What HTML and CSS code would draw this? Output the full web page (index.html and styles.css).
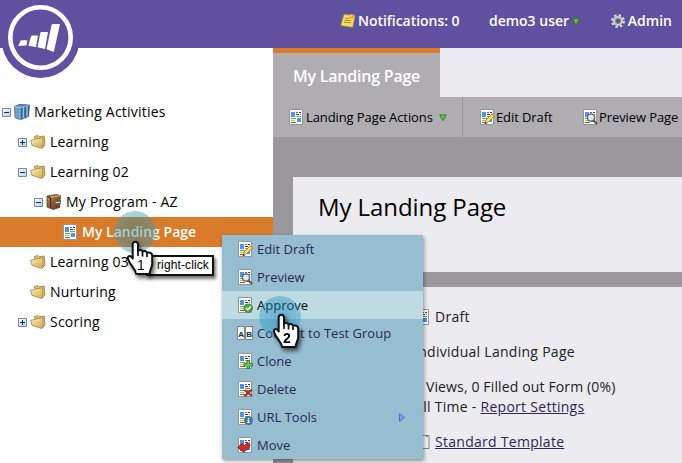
FILE: index.html
```html
<!DOCTYPE html>
<html lang="en">
<head>
<meta charset="utf-8">
<title>My Landing Page</title>
<link rel="stylesheet" href="styles.css">
</head>
<body>
<svg class="defs" width="0" height="0" aria-hidden="true">
  <defs>
    <linearGradient id="gold" x1="0" y1="0" x2="1" y2="1"><stop offset="0" stop-color="#fff3bd"/><stop offset="1" stop-color="#cda74b"/></linearGradient>
    <linearGradient id="blue" x1="0" y1="0" x2="1" y2="0"><stop offset="0" stop-color="#7fadd2"/><stop offset="1" stop-color="#2b5f91"/></linearGradient>
    <linearGradient id="boxfill" x1="0" y1="0" x2="1" y2="1"><stop offset="0" stop-color="#fff"/><stop offset="1" stop-color="#bccbe2"/></linearGradient>
    <linearGradient id="leather" x1="0" y1="0" x2="1" y2="1"><stop offset="0" stop-color="#b98c61"/><stop offset="1" stop-color="#593016"/></linearGradient>
    <symbol id="page" viewBox="0 0 16 16">
      <path d="M1.500.5h13v15h-13z" fill="#fff" stroke="#8c979f"/>
      <path d="M3 3h4v5H3zM9 9h4v4H9z" fill="#5094e0"/>
      <path d="M8 3.500h2M12 5.500h1" stroke="#d33a35"/><path d="M11 3.500h2M8 5.500h3" stroke="#343e4c"/>
      <path d="M8 7.500h5M3 9.500h5" stroke="#65ae40"/><path d="M3 11.500h4" stroke="#ddb52c"/><path d="M3 13.500h5" stroke="#b84636"/>
    </symbol>
    <symbol id="edit" viewBox="0 0 16 16"><use href="#page" width="16" height="16"/><path d="M6 15l1-4 6-6 2.500 2-6 6z" fill="#ffe25b" stroke="#8b6e24" stroke-width=".8"/><path d="M6 15l.5-2 1.300 1.300z" fill="#222"/><path d="M13 5l2.500 2 .5-1.500-1.500-1.400z" fill="#d98e73"/></symbol>
    <symbol id="preview" viewBox="0 0 16 16"><use href="#page" width="16" height="16"/><circle cx="9" cy="8.500" r="3.600" fill="#dcecf8" fill-opacity=".9" stroke="#59616b" stroke-width="1.300"/><path d="M11.500 11.500l3.600 3.600" stroke="#70462f" stroke-width="2"/></symbol>
    <symbol id="approve" viewBox="0 0 16 16"><use href="#page" width="16" height="16"/><circle cx="11.200" cy="11.200" r="4.300" fill="#4da641" stroke="#327c2c" stroke-width=".7"/><path d="M9 11.100l1.700 1.700 3-3.300" fill="none" stroke="#fff" stroke-width="1.500"/></symbol>
    <symbol id="clone" viewBox="0 0 16 16"><use href="#page" width="16" height="16"/><path d="M10 7.500h2.500v3h3V13h-3v2.500H10V13H7v-2.500h3z" fill="#75cc57" stroke="#238332" stroke-width=".9"/></symbol>
    <symbol id="delete" viewBox="0 0 16 16"><use href="#page" width="16" height="16"/><path d="M7.500 9l7.500 6M15 8.500l-7.500 7" stroke="#bd2b26" stroke-width="2.200"/></symbol>
    <symbol id="url" viewBox="0 0 16 16"><use href="#page" width="16" height="16"/><circle cx="11.500" cy="11.500" r="4" fill="#487eaf" stroke="#31577d" stroke-width=".7"/><path d="M11.500 8.800v1.200M10.500 11h1v2.500m-1.200 0H13" stroke="#fff" fill="none" stroke-width="1.200"/></symbol>
    <symbol id="move" viewBox="0 0 16 16"><use href="#page" width="16" height="16"/><path d="M.5 10.500L5.500 6l.8 2.300C8.500 8.500 9.500 7 10 5.500l3 1.500c-.3 4-2 6.500-5.500 6.500l-.3 2z" fill="#c72f31" stroke="#841e29" stroke-width=".8"/></symbol>
    <symbol id="ab" viewBox="0 0 16 16"><path d="M.5 1.500h7v13h-7zM8.500 1.500h7v13h-7z" fill="#f5f7f8" stroke="#78868e"/><path d="M13 1.500h3" stroke="#d84d39"/><text x="1.200" y="11.500" class="letter">A</text><text x="9.200" y="11.500" class="letter">B</text></symbol>
    <symbol id="template" viewBox="0 0 16 16"><path d="M.5 1.500h14.500v13H.5z" fill="#f1f5f5" stroke="#78868e"/><path d="M12 2.500h2" stroke="#d84d39"/></symbol>
    <symbol id="folder" viewBox="0 0 16 16"><path d="M4.500 4V2.500L8 1.500l1.200 1.300 5-.8.800 9-2.500 2.500z" fill="#e1c273" stroke="#957c42" stroke-width=".8"/><path d="M.6 6.200l4.200-.7L6 4.800l6.800-1 .2 10-2 .5-9-3z" fill="url(#gold)" stroke="#a18442" stroke-width=".8"/></symbol>
    <symbol id="books" viewBox="0 0 16 16"><path d="M.5 2.500L5 .5l10.500.5-1 11.500-8 3.200L1 13.500z" fill="url(#blue)" stroke="#365f85" stroke-width=".8"/><path d="M1 2.700l4.700 1L15 1.300M6 4v11.500" fill="none" stroke="#b9d5ea" stroke-width=".8"/><path d="M9.800 3v11M13 2.300v10.500" stroke="#c6dff0"/><path d="M7.300 4v11M10.800 3v10.500" stroke="#244f77" stroke-width=".8"/></symbol>
    <symbol id="program" viewBox="0 0 16 16"><path d="M1 2l9-1.500 4.500 1-.8 12-6.500 2L1 13z" fill="url(#leather)" stroke="#684222" stroke-width=".8"/><path d="M1.500 2.500l3 1.200.3 11" fill="none" stroke="#41220f" stroke-width="1"/><path d="M4.500 3.200l9.500-1.600" stroke="#d7b48b"/><path d="M9 7.800l5.500-.9v2.200l-5.500.9z" fill="#efd7ae" stroke="#432713" stroke-width=".6"/></symbol>
    <symbol id="minus" viewBox="0 0 9 9"><path d="M.5.5h8v8h-8z" fill="url(#boxfill)" stroke="#7189ad"/><path d="M2 4.500h5" stroke="#182b4c"/></symbol>
    <symbol id="plus" viewBox="0 0 9 9"><use href="#minus" width="9" height="9"/><path d="M4.500 2v5" stroke="#182b4c"/></symbol>
    <symbol id="down" viewBox="0 0 8 7"><path d="M.7.8h6.600L4.500 6.300h-1z" fill="#64bf37" stroke="#297e25" stroke-width=".8"/></symbol>
    <symbol id="note" viewBox="0 0 16 16"><path d="M4 1.500l11 1-2.300 11.700L.8 12.500z" fill="#f3df66" stroke="#b9952e" stroke-width=".8"/><path d="M5 5l4 .5M4.500 7l7 .7M4 9l7 .8" stroke="#a88a37"/><circle cx="11.500" cy="3.500" r="2.400" fill="#f5a13b"/><circle cx="11" cy="3" r=".8" fill="#fff3a5"/></symbol>
    <symbol id="gear" viewBox="0 0 16 16"><circle cx="8" cy="8" r="5.900" fill="none" stroke="#dce1e1" stroke-width="2" stroke-dasharray="2.400 2.230"/><circle cx="8" cy="8" r="4" fill="#7b838a" stroke="#cbd1d3" stroke-width="2"/><circle cx="8" cy="8" r="1.800" fill="#514c76"/></symbol>
    <symbol id="hand" viewBox="0 0 30 36"><path d="M6.700 18.500V4.500c0-3.800 5.300-3.800 5.300 0v6.300c1-1.300 4-1.200 4.500.9 1.200-1.300 4-.8 4.500 1.200 2.300-1.200 5.200.3 5.200 3V24c0 3.500-2.200 5.500-2.700 10H10.200c-.5-4.500-4-7-6.200-11-1.500-2.700-3.200-4.800-1.700-6.400 1.800-1.600 3.400.200 4.400 1.900z" fill="#fff" stroke="#111" stroke-width="2" stroke-linejoin="round"/><path d="M12 10.500v5.500M16.500 12v4.500M21 13.500v3.500" stroke="#111" stroke-width="1.700"/></symbol>
  </defs>
</svg>
<div class="app">
  <header class="header">
    <div class="account notifications"><svg class="icon"><use href="#note"/></svg><span>Notifications: 0</span></div>
    <div class="account user"><span>demo3 user</span><svg class="down"><use href="#down"/></svg></div>
    <div class="account admin"><svg class="icon"><use href="#gear"/></svg><span>Admin</span></div>
  </header>
  <svg class="logo" viewBox="0 0 78 78"><circle cx="40.500" cy="39" r="39" fill="#5f51a0"/><circle cx="40.500" cy="37.500" r="30.200" fill="none" stroke="#fff" stroke-width="4.600"/><path d="M18.300 46l2-5q.5-.8 1.500-.8h5.400l-.7 5.300q-4-.1-8.200.5zM28.300 45.800L31 36.500q.4-1 1.500-1H38L36 47zM37.500 47.300L40.300 33q.3-1 1.300-1H48l-3 17zM46.500 49.300l5-24.100q.4-1.200 1.500-1.200h7l-6.200 28z" fill="#fff"/></svg>
  <div class="workspace">
    <nav class="sidebar">
      <div class="row root"><svg class="box"><use href="#minus"/></svg><svg class="icon"><use href="#books"/></svg><span>Marketing Activities</span></div>
      <div class="row level1"><svg class="box"><use href="#plus"/></svg><svg class="icon"><use href="#folder"/></svg><span>Learning</span></div>
      <div class="row level1"><svg class="box"><use href="#minus"/></svg><svg class="icon"><use href="#folder"/></svg><span>Learning 02</span></div>
      <div class="row level2"><svg class="box"><use href="#minus"/></svg><svg class="icon"><use href="#program"/></svg><span>My Program - AZ</span></div>
      <div class="row selected"><svg class="icon"><use href="#page"/></svg><span>My Landing Page</span></div>
      <div class="row level1 leaf"><svg class="icon"><use href="#folder"/></svg><span>Learning 03</span></div>
      <div class="row level1 leaf"><svg class="icon"><use href="#folder"/></svg><span>Nurturing</span></div>
      <div class="row level1"><svg class="box"><use href="#plus"/></svg><svg class="icon"><use href="#folder"/></svg><span>Scoring</span></div>
    </nav>
    <main class="main">
      <div class="tabs"><div class="tab">My Landing Page</div></div>
      <div class="toolbar">
        <div class="actions"><svg class="icon"><use href="#page"/></svg><span>Landing Page Actions</span><svg class="down"><use href="#down"/></svg></div>
        <div class="tool edit-tool"><svg class="icon"><use href="#edit"/></svg><span>Edit Draft</span></div>
        <div class="tool"><svg class="icon"><use href="#preview"/></svg><span>Preview Page</span></div>
      </div>
      <div class="content">
        <h1>My Landing Page</h1>
        <section class="details">
          <div class="detail status"><svg class="icon"><use href="#page"/></svg><span>Draft</span></div>
          <div class="detail individual">Individual Landing Page</div>
          <div class="detail views">0 Views, 0 Filled out Form (0%)</div>
          <div class="detail time">All Time - <a>Report Settings</a></div>
          <div class="detail template"><svg class="icon"><use href="#template"/></svg><a>Standard Template</a></div>
        </section>
      </div>
    </main>
  </div>
  <div class="menu">
    <div class="item"><svg class="icon"><use href="#edit"/></svg><span>Edit Draft</span></div>
    <div class="item"><svg class="icon"><use href="#preview"/></svg><span>Preview</span></div>
    <div class="item active"><svg class="icon"><use href="#approve"/></svg><span>Approve</span></div>
    <div class="item"><svg class="icon"><use href="#ab"/></svg><span>Convert to Test Group</span></div>
    <div class="item"><svg class="icon"><use href="#clone"/></svg><span>Clone</span></div>
    <div class="item"><svg class="icon"><use href="#delete"/></svg><span>Delete</span></div>
    <div class="item"><svg class="icon"><use href="#url"/></svg><span>URL Tools</span><svg class="submenu" viewBox="0 0 6 9"><path d="M.5.5l5 4-5 4z" fill="#70a0ee" stroke="#4472ce"/></svg></div>
    <div class="item"><svg class="icon"><use href="#move"/></svg><span>Move</span></div>
  </div>
  <div class="spot spot-one"></div><div class="click-label">right-click</div>
  <div class="pointer one"><svg><use href="#hand"/></svg><b>1</b></div>
  <div class="spot spot-two"></div><div class="pointer two"><svg><use href="#hand"/></svg><b>2</b></div>
</div>
</body>
</html>
```
FILE: styles.css
```css
* { box-sizing: border-box; }
body { margin: 0; font: 14px/20px "Open Sans", "Noto Sans", sans-serif; color: #000; }
.defs { position: absolute; }
.app { position: relative; width: 682px; height: 463px; overflow: hidden; background: #fff; }
.icon { width: 16px; height: 16px; flex: none; display: block; }
.letter { font: bold 8px "Liberation Sans", sans-serif; fill: #202d38; }
.header { height: 48px; background: #5f51a0; display: flex; align-items: center; padding: 0 10px 6px 340px; color: #fff; font-weight: 600; }
.account { display: flex; align-items: center; white-space: nowrap; }
.notifications { width: 149px; gap: 2px; }
.notifications span { letter-spacing: -.04px; }
.user { width: 121px; gap: 3px; }
.admin { gap: 2px; }
.down { width: 8px; height: 7px; flex: none; }
.logo { position: absolute; left: 0; top: 0; width: 78px; height: 78px; }
.workspace { display: grid; grid-template-columns: 273px 1fr; height: 415px; }
.sidebar { padding-top: 49px; background: #fff; letter-spacing: .22px; }
.row { height: 30px; display: flex; align-items: center; padding-left: 2px; white-space: nowrap; }
.row .icon { margin-left: 3px; }
.row span { margin-left: 4px; }
.box { width: 9px; height: 9px; flex: none; }
.level1 { padding-left: 18px; }
.leaf { padding-left: 27px; }
.level2 { padding-left: 34px; }
.selected { padding-left: 59px; background: #d97b2b; color: #fff; font-weight: 600; letter-spacing: 0; }
.main { background: #9a989d; min-width: 0; }
.tabs { height: 49px; background: #ecebf0; }
.tab { width: 167px; height: 49px; border-top: 5px solid #d97b2b; background: #afadb2; color: #fff; font-size: 16px; font-weight: 600; letter-spacing: -.22px; line-height: 46px; padding-left: 20px; white-space: nowrap; }
.toolbar { height: 40px; background: #afadb2; display: flex; white-space: nowrap; font-size: 13px; letter-spacing: -.1px; }
.actions, .tool { display: flex; align-items: center; }
.actions { width: 190px; padding-left: 15px; border-right: 1px solid #98969b; }
.actions span { width: 131px; margin: 0 2px; }
.tool { gap: 1px; }
.edit-tool { width: 119px; padding-left: 16px; }
.content { margin: 40px 0 0 20px; }
h1 { margin: 0; height: 95px; background: #ecebf0; font-size: 24px; letter-spacing: -.08px; line-height: 60px; font-weight: 400; padding-left: 25px; }
.details { margin-top: 15px; height: 190px; padding: 20px 0 0 121px; background: #ecebf0; color: #222; white-space: nowrap; letter-spacing: .28px; }
.detail { height: 20px; }
.status, .template { display: flex; align-items: center; gap: 5px; }
.individual, .views, .template { margin-top: 15px; }
.views { letter-spacing: .14px; }
.details a { color: #2c2756; text-decoration: underline; }
.menu { position: absolute; left: 222px; top: 235px; width: 201px; height: 224px; background: #96bed0; box-shadow: 1px 2px 4px #0006; color: #2c2856; font-size: 13px; }
.item { height: 28px; display: flex; align-items: center; padding-left: 15px; gap: 4px; white-space: nowrap; }
.item.active { background: #bedae2; color: #000; }
.submenu { width: 6px; height: 9px; margin: 0 18px 0 auto; }
.spot { position: absolute; width: 42px; height: 42px; border-radius: 50%; }
.spot-one { left: 114px; top: 211px; background: radial-gradient(circle, #1d7f9b70, #3796ae70 60%, #55adc970); }
.spot-two { left: 259px; top: 296px; background: radial-gradient(circle, #1d87bd80, #2b98cb70 60%, #4ea7d060); }
.pointer { position: absolute; width: 30px; height: 36px; filter: drop-shadow(2px 3px 2px #0009); }
.pointer svg { width: 30px; height: 36px; }
.pointer b { position: absolute; left: 11px; top: 18px; font: 14px/14px "Liberation Sans", sans-serif; }
.pointer.two b { font-weight: bold; }
.one { left: 126px; top: 240px; }
.two { left: 272px; top: 313px; }
.click-label { position: absolute; left: 146px; top: 255px; width: 68px; height: 21px; border: 2px solid #111; background: #fff; box-shadow: 2px 3px 3px #0008; font: 12px/16px "Liberation Sans", sans-serif; letter-spacing: .12px; padding-left: 9px; white-space: nowrap; }
```
